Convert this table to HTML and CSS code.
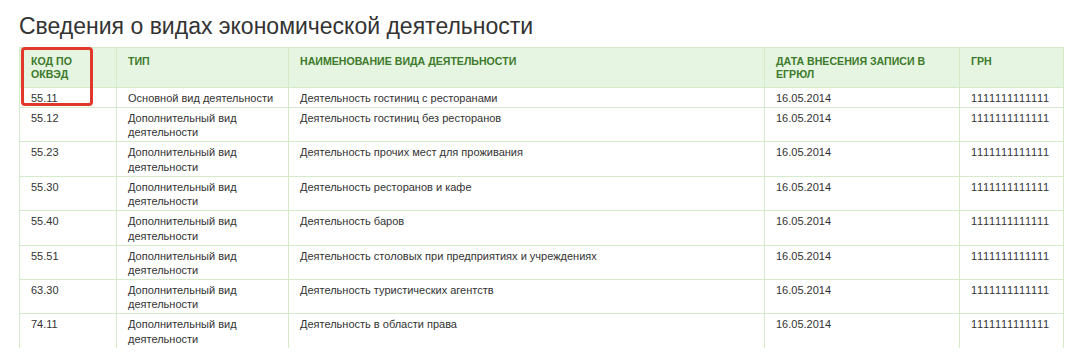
FILE: index.html
```html
<!DOCTYPE html>
<html lang="ru">
<head>
<meta charset="utf-8">
<title>Сведения о видах экономической деятельности</title>
<link rel="stylesheet" href="styles.css">
</head>
<body>
<div class="page">
  <h1 class="title">Сведения о видах экономической деятельности</h1>
  <div class="table-wrap">
    <table class="okved">
      <colgroup>
        <col class="c-code"><col class="c-type"><col class="c-name"><col class="c-date"><col class="c-grn">
      </colgroup>
      <thead>
        <tr>
          <th>Код по ОКВЭД</th>
          <th>Тип</th>
          <th>Наименование вида деятельности</th>
          <th>Дата внесения записи в ЕГРЮЛ</th>
          <th>ГРН</th>
        </tr>
      </thead>
      <tbody>
        <tr><td>55.11</td><td>Основной вид деятельности</td><td>Деятельность гостиниц с ресторанами</td><td>16.05.2014</td><td class="grn">1111111111111</td></tr>
        <tr><td>55.12</td><td>Дополнительный вид деятельности</td><td>Деятельность гостиниц без ресторанов</td><td>16.05.2014</td><td class="grn">1111111111111</td></tr>
        <tr><td>55.23</td><td>Дополнительный вид деятельности</td><td>Деятельность прочих мест для проживания</td><td>16.05.2014</td><td class="grn">1111111111111</td></tr>
        <tr><td>55.30</td><td>Дополнительный вид деятельности</td><td>Деятельность ресторанов и кафе</td><td>16.05.2014</td><td class="grn">1111111111111</td></tr>
        <tr><td>55.40</td><td>Дополнительный вид деятельности</td><td>Деятельность баров</td><td>16.05.2014</td><td class="grn">1111111111111</td></tr>
        <tr><td>55.51</td><td>Дополнительный вид деятельности</td><td>Деятельность столовых при предприятиях и учреждениях</td><td>16.05.2014</td><td class="grn">1111111111111</td></tr>
        <tr><td>63.30</td><td>Дополнительный вид деятельности</td><td>Деятельность туристических агентств</td><td>16.05.2014</td><td class="grn">1111111111111</td></tr>
        <tr><td>74.11</td><td>Дополнительный вид деятельности</td><td>Деятельность в области права</td><td>16.05.2014</td><td class="grn">1111111111111</td></tr>
      </tbody>
    </table>
    <div class="highlight"></div>
  </div>
</div>
</body>
</html>
```

FILE: styles.css
```css
html, body {
  margin: 0;
  padding: 0;
  background: #ffffff;
}

body {
  font-family: "Liberation Sans", Arial, sans-serif;
  color: #333333;
}

.page {
  padding: 13px 16px 0 19px;
}

.title {
  margin: 0 0 8px 0;
  font-size: 23px;
  line-height: 26px;
  font-weight: normal;
  color: #333333;
}

.table-wrap {
  position: relative;
  width: 1044px;
}

.okved {
  width: 1044px;
  table-layout: fixed;
  border-collapse: collapse;
  font-size: 11px;
}

.c-code { width: 97px; }
.c-type { width: 172px; }
.c-name { width: 476px; }
.c-date { width: 195px; }
.c-grn  { width: 104px; }

.okved th,
.okved td {
  border: 1px solid #d3ebc8;
  text-align: left;
  vertical-align: top;
  padding: 3px 11px 1.6px;
  line-height: 14.4px;
}

.okved th {
  background: #e5f5e1;
  color: #3d7a2b;
  font-weight: bold;
  font-size: 10.6px;
  text-transform: uppercase;
  line-height: 13.4px;
  padding: 7px 11px 5px;
  height: 27px;
}

.okved td.grn {
  letter-spacing: 0.7px;
}

.okved tbody tr:last-child td {
  border-bottom: none;
}

.highlight {
  position: absolute;
  left: 2px;
  top: 0;
  width: 72px;
  height: 59px;
  box-sizing: border-box;
  border: 3px solid #e2382c;
  border-radius: 4px;
}
```
